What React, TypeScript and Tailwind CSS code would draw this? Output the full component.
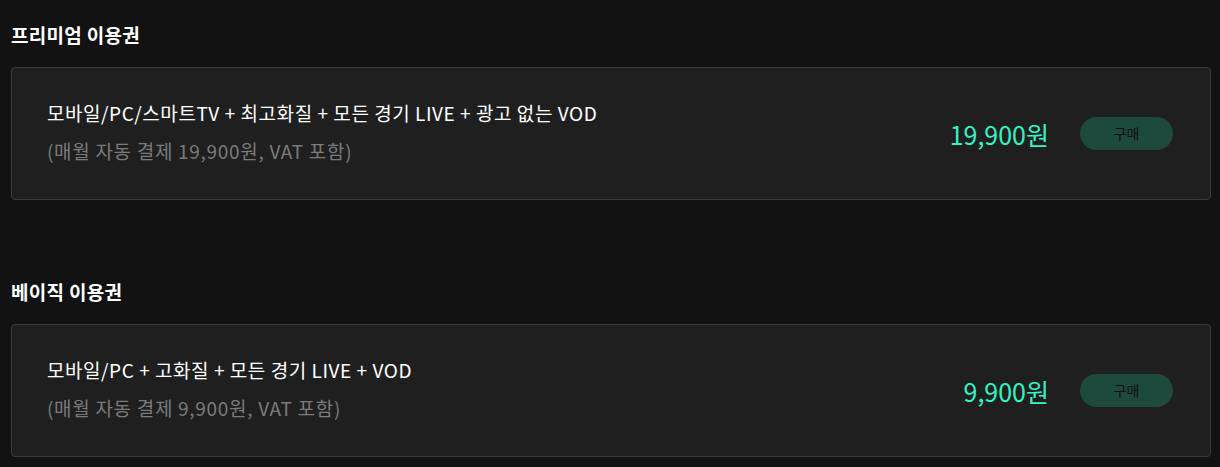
import React from "react";

const plans = [
  {
    heading: "프리미엄 이용권",
    title: "모바일/PC/스마트TV + 최고화질 + 모든 경기 LIVE + 광고 없는 VOD",
    sub: "(매월 자동 결제 19,900원, VAT 포함)",
    price: "19,900원",
  },
  {
    heading: "베이직 이용권",
    title: "모바일/PC + 고화질 + 모든 경기 LIVE + VOD",
    sub: "(매월 자동 결제 9,900원, VAT 포함)",
    price: "9,900원",
  },
];

export default function App() {
  return (
    <div
      className="min-h-[467px] w-full bg-[#121212] px-[11px] pt-[23px]"
      style={{ fontFamily: '"Noto Sans CJK KR", "Noto Sans", sans-serif' }}
    >
      {plans.map((p, i) => (
        <section key={i} className={i > 0 ? "mt-[80px]" : ""}>
          <h2 className="h-[24px] text-[19px] font-bold leading-[24px] tracking-[0.3px] text-white">
            {p.heading}
          </h2>
          <div className="mt-[20px] flex h-[133px] w-[1200px] items-center rounded-[4px] border border-[#3a3a3a] bg-[#1f1f1f] pl-[35px] pr-[37px]">
            <div className="flex flex-1 flex-col pb-[4px]">
              <div className="text-[19px] leading-[28px] tracking-[0.55px] text-white">
                {p.title}
              </div>
              <div className="mt-[10px] text-[19px] leading-[28px] tracking-[0.7px] text-[#7b7b7b]">
                {p.sub}
              </div>
            </div>
            <div className="text-[25px] leading-[30px] text-[#33f5c3]">{p.price}</div>
            <button className="ml-[31px] h-[33px] w-[93px] rounded-full bg-[#1e4a3d] text-[14px] text-[#0f0f0f]">
              구매
            </button>
          </div>
        </section>
      ))}
    </div>
  );
}
